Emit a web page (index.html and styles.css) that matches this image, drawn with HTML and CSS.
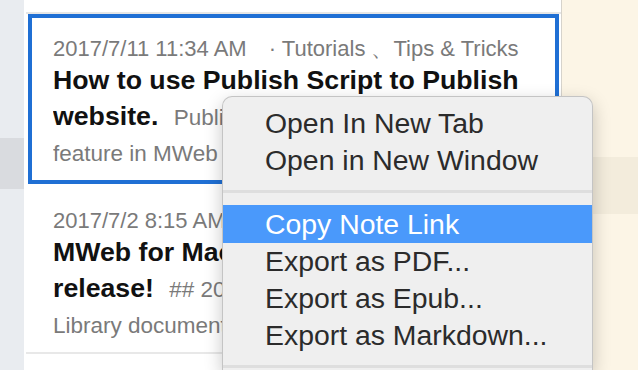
FILE: index.html
```html
<!DOCTYPE html>
<html lang="en">
<head>
  <meta charset="UTF-8" />
  <title>MWeb</title>
  <link rel="stylesheet" href="styles.css">
</head>
<body>
  <div class="sidebar">
    <div class="side-row active"></div>
  </div>

  <div class="note-list">
    <div class="list-top"></div>

    <div class="note selected">
      <div class="meta">
        <span class="date">2017/7/11 11:34 AM</span>
        <span class="tags">· Tutorials 、Tips &amp; Tricks</span>
      </div>
      <p class="summary"><b>How to use Publish Script to Publish website.</b> <span class="excerpt">Publish Script is a brand new feature in MWeb for Mac.</span></p>
    </div>

    <div class="note">
      <div class="meta">
        <span class="date">2017/7/2 8:15 AM</span>
        <span class="tags">· News</span>
      </div>
      <p class="summary"><b>MWeb for Mac 3.0 public beta version release!</b> <span class="excerpt">## 2017/7/2 New features and the Library document.</span></p>
    </div>
  </div>

  <div class="preview">
    <div class="preview-band"></div>
  </div>

  <div class="context-menu">
    <div class="menu-item">Open In New Tab</div>
    <div class="menu-item">Open in New Window</div>
    <div class="menu-sep"></div>
    <div class="menu-item hover">Copy Note Link</div>
    <div class="menu-item">Export as PDF...</div>
    <div class="menu-item">Export as Epub...</div>
    <div class="menu-item">Export as Markdown...</div>
    <div class="menu-sep"></div>
  </div>
</body>
</html>
```

FILE: styles.css
```css
body {
  margin: 0;
  width: 638px;
  height: 370px;
  overflow: hidden;
  display: flex;
  background: #fff;
  font-family: "Liberation Sans", Arial, sans-serif;
  position: relative;
}
.sidebar {
  width: 24px;
  flex-shrink: 0;
  background: #e9ecf0;
  padding-top: 138px;
}
.side-row.active {
  height: 51px;
  background: #d9dbdf;
}
.note-list {
  width: 537px;
  flex-shrink: 0;
  background: #fff;
  border-right: 1px solid #d6d3cc;
}
.list-top {
  height: 12px;
  margin-left: 2px;
  border-bottom: 2px solid #e6e6e6;
}
.note {
  margin: 0 2px 0 4px;
  border: 4px solid transparent;
  padding: 17px 18px 10px 21px;
}
.note + .note {
  margin: 0;
  margin-left: 2px;
  padding: 19px 20px 10px 27px;
  border-width: 4px 0 0 0;
  border-bottom: 2px solid #e8e8e8;
}
.note.selected {
  border-color: #1f6fd4;
}
.meta {
  font-size: 22px;
  line-height: 27px;
  color: #7a7a7a;
  white-space: nowrap;
}
.tags {
  margin-left: 16px;
}
.summary {
  margin: 0;
  font-size: 26.7px;
  line-height: 36px;
  height: 108px;
  overflow: hidden;
  color: #111;
}
.excerpt {
  font-size: 22.5px;
  line-height: 1;
  color: #7a7a7a;
  margin-left: 8px;
}
.preview {
  flex: 1;
  background: #fcf5e6;
  padding-top: 157px;
}
.preview-band {
  height: 57px;
  background: #f3ecdc;
}
.context-menu {
  position: absolute;
  left: 222px;
  top: 96px;
  width: 371px;
  height: 274px;
  padding-top: 8px;
  background: #efefef;
  border: 1px solid #c4c4c4;
  border-bottom: none;
  border-radius: 10px 10px 0 0;
  box-shadow: 0 6px 18px rgba(0, 0, 0, 0.22);
  box-sizing: border-box;
  overflow: hidden;
}
.menu-item {
  height: 37px;
  line-height: 37px;
  padding-left: 42px;
  font-size: 28.4px;
  color: #2b2b2b;
  white-space: nowrap;
}
.menu-item.hover {
  height: 38px;
  line-height: 38px;
  background: #4a99fb;
  color: #fff;
}
.menu-sep {
  height: 3px;
  margin: 11px 0 12px;
  background: #dedede;
}
```
